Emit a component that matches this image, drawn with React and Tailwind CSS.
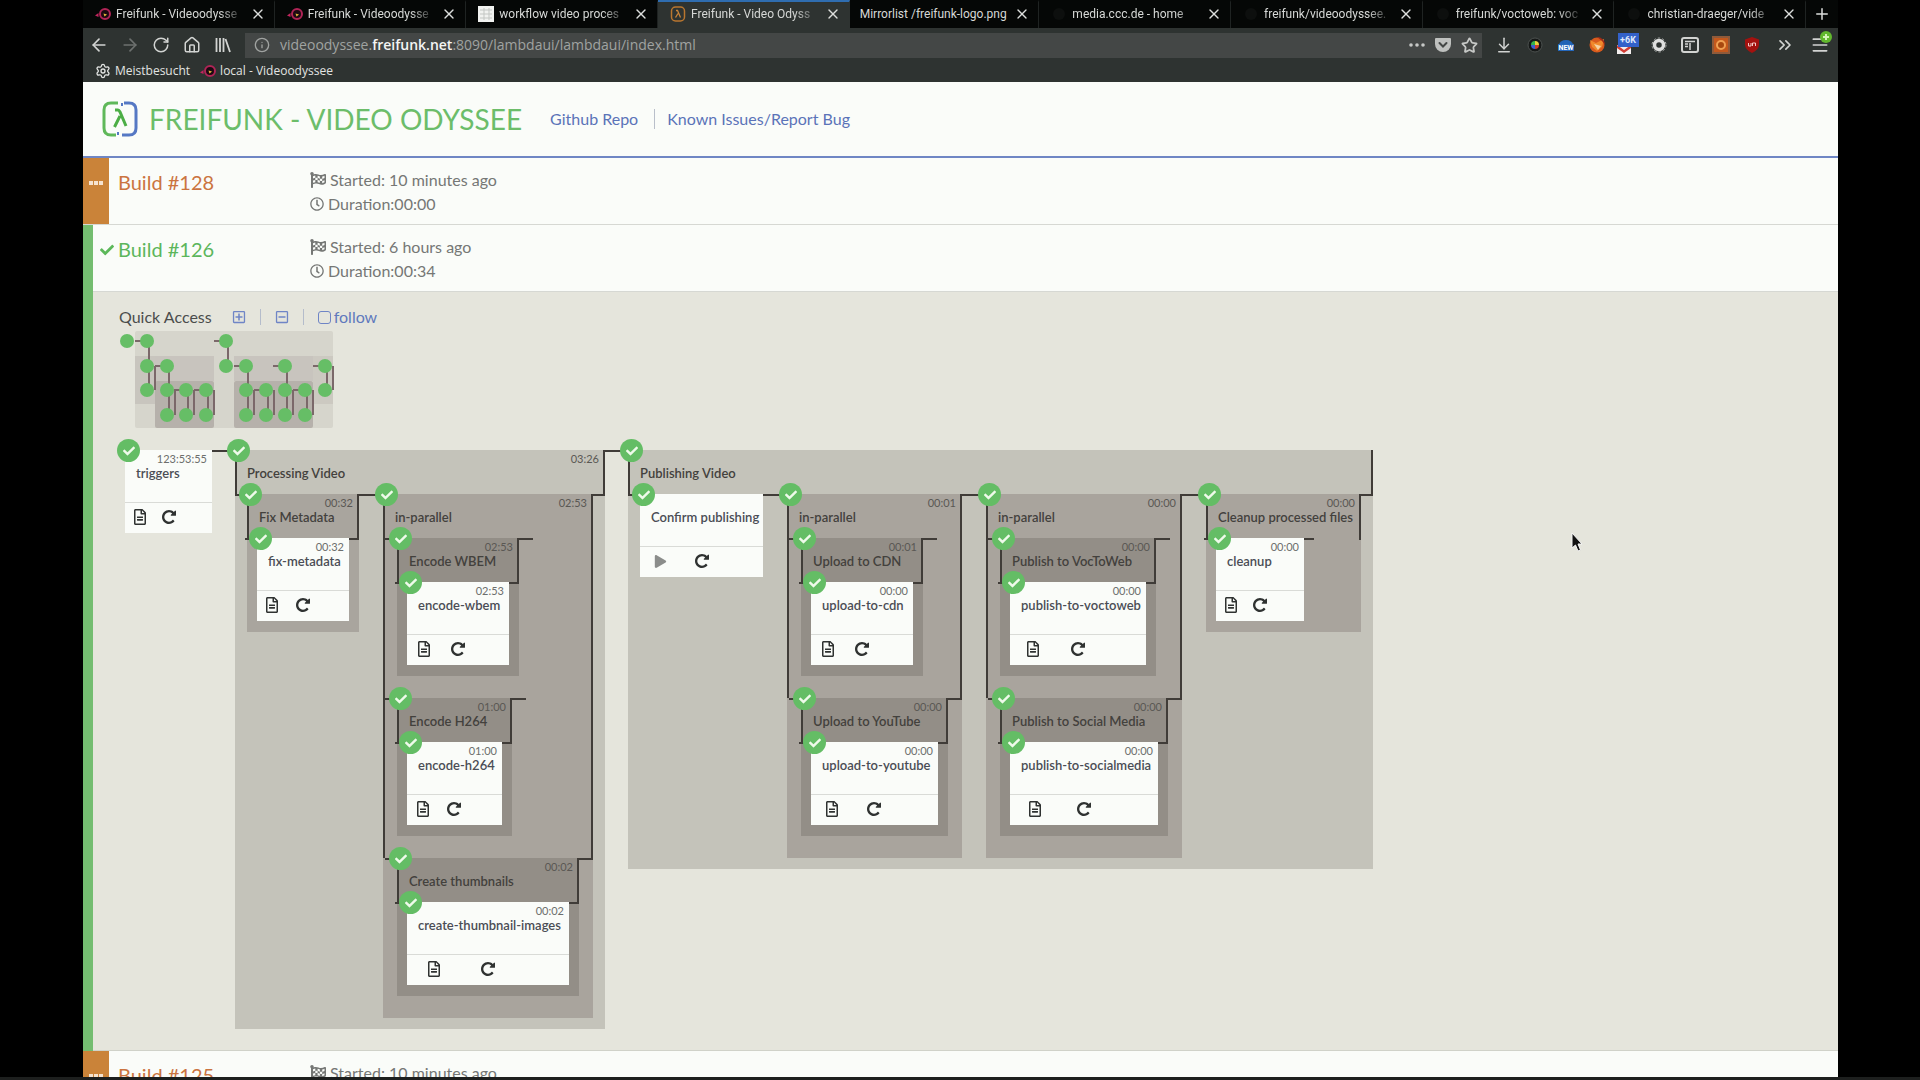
import clsx from "clsx";
import {
    FaCheck,
    FaFlagCheckered,
    FaPlay,
    FaRegClock,
    FaRegFileAlt,
    FaRegMinusSquare,
    FaRegPlusSquare,
} from "react-icons/fa";
import {
    ArrowDownToLine,
    ArrowLeft,
    ArrowRight,
    ChevronsRight,
    House,
    Info,
    Menu,
    PanelLeft,
    Plus,
    RotateCw,
    Settings,
    Star,
    X,
} from "lucide-react";

const tabs = [
    { title: "Freifunk - Videoodysse", icon: "freifunk" },
    { title: "Freifunk - Videoodysse", icon: "freifunk" },
    { title: "workflow video proces", icon: "sheet" },
    { title: "Freifunk - Video Odyss", icon: "lambda", active: true },
    { title: "Mirrorlist /freifunk-logo.png" },
    { title: "media.ccc.de - home", icon: "dark" },
    { title: "freifunk/videoodyssee.", icon: "dark" },
    { title: "freifunk/voctoweb: voc", icon: "dark" },
    { title: "christian-draeger/vide", icon: "dark" },
];

const pipeline = [
    { name: "triggers", time: "123:53:55", width: "w-[87px]" },
    {
        name: "Processing Video",
        time: "03:26",
        steps: [
            {
                name: "Fix Metadata",
                time: "00:32",
                tone: "bg-[#a9a59e]",
                steps: [
                    { name: "fix-metadata", time: "00:32", width: "w-[92px]" },
                ],
            },
            {
                name: "in-parallel",
                time: "02:53",
                parallel: true,
                steps: [
                    {
                        name: "Encode WBEM",
                        time: "02:53",
                        steps: [
                            {
                                name: "encode-wbem",
                                time: "02:53",
                                width: "w-[102px]",
                            },
                        ],
                    },
                    {
                        name: "Encode H264",
                        time: "01:00",
                        steps: [
                            {
                                name: "encode-h264",
                                time: "01:00",
                                width: "w-[95px]",
                            },
                        ],
                    },
                    {
                        name: "Create thumbnails",
                        time: "00:02",
                        steps: [
                            {
                                name: "create-thumbnail-images",
                                time: "00:02",
                                width: "w-[162px]",
                            },
                        ],
                    },
                ],
            },
        ],
    },
    {
        name: "Publishing Video",
        last: true,
        steps: [
            { name: "Confirm publishing", manual: true, width: "w-[123px]" },
            {
                name: "in-parallel",
                time: "00:01",
                parallel: true,
                steps: [
                    {
                        name: "Upload to CDN",
                        time: "00:01",
                        steps: [
                            {
                                name: "upload-to-cdn",
                                time: "00:00",
                                width: "w-[102px]",
                            },
                        ],
                    },
                    {
                        name: "Upload to YouTube",
                        time: "00:00",
                        steps: [
                            {
                                name: "upload-to-youtube",
                                time: "00:00",
                                width: "w-[127px]",
                            },
                        ],
                    },
                ],
            },
            {
                name: "in-parallel",
                time: "00:00",
                parallel: true,
                steps: [
                    {
                        name: "Publish to VocToWeb",
                        time: "00:00",
                        steps: [
                            {
                                name: "publish-to-voctoweb",
                                time: "00:00",
                                width: "w-[136px]",
                            },
                        ],
                    },
                    {
                        name: "Publish to Social Media",
                        time: "00:00",
                        steps: [
                            {
                                name: "publish-to-socialmedia",
                                time: "00:00",
                                width: "w-[148px]",
                            },
                        ],
                    },
                ],
            },
            {
                name: "Cleanup processed files",
                time: "00:00",
                width: "w-[155px]",
                steps: [{ name: "cleanup", time: "00:00", width: "w-[88px]" }],
            },
        ],
    },
];

const toneByDepth = ["bg-[#c4c3ba]", "bg-[#a9a49d]", "bg-[#938e87]"];

function FreifunkIcon() {
    return (
        <svg viewBox="0 0 16 16" className="size-4 shrink-0">
            <circle cx="10" cy="8" r="5" fill="#1c0a12" stroke="#b02456" strokeWidth="2" />
            <path d="M0 9.500L3.500 7v4z" fill="#c3265f" />
            <path d="M8.500 7.500L12 8.500L9.500 10.500z" fill="#e5b53a" />
        </svg>
    );
}

function TabIcon({ type }) {
    if (type === "freifunk") return <FreifunkIcon />;
    if (type === "sheet")
        return (
            <svg viewBox="0 0 16 16" className="size-4 shrink-0">
                <path d="M0 0h16v16H0z" fill="#f1f2f0" />
                <path d="M2 4h12M2 8h12M2 12h12M6 2v12M11 2v12" stroke="#c3c6c3" />
            </svg>
        );
    if (type === "lambda")
        return (
            <svg viewBox="0 0 16 16" className="size-4 shrink-0" fill="none">
                <rect x="1.500" y="1" width="13" height="14" rx="4" stroke="#b9762f" strokeWidth="1.500" />
                <path d="M6 4.500h1.500L10.500 11.500M8 7.500L5.500 11.500" stroke="#c9843a" strokeWidth="1.300" />
            </svg>
        );
    return (
        <svg viewBox="0 0 16 16" className="size-4 shrink-0">
            <circle cx="8" cy="8" r="6" fill="#0d0f0e" />
        </svg>
    );
}

function Tab({ title, icon, active }) {
    return (
        <div
            className={clsx(
                "flex min-w-0 flex-1 items-center gap-[5px] border-t-2 border-r pr-2 pb-[2px]",
                icon ? "pl-3" : "pl-[10px]",
                active
                    ? "border-t-[#2f6db0] border-r-transparent bg-[#2e3331]"
                    : "border-t-transparent border-r-[#1f2322]"
            )}
        >
            {icon && <TabIcon type={icon} />}
            <a
                href="#tab"
                className={clsx(
                    "min-w-0 flex-1 overflow-hidden text-xs whitespace-nowrap text-[#d6d8d6]",
                    icon && "mask-r-from-80% mask-r-to-100%"
                )}
            >
                {title}
            </a>
            <button type="button" aria-label="Close tab">
                <X className="size-4 text-[#dcdedc]" />
            </button>
        </div>
    );
}

function ToolButton({ label, className, children }) {
    return (
        <button
            type="button"
            aria-label={label}
            className={clsx(
                "flex w-[31px] shrink-0 items-center justify-center text-[#d2d4d2]",
                className
            )}
        >
            {children}
        </button>
    );
}

function Library() {
    return (
        <svg viewBox="0 0 16 16" className="size-4" stroke="currentColor" strokeWidth="1.800">
            <path d="M1.500 1v14M5 1v14M8.500 1v14M10.500 2L15 15" />
        </svg>
    );
}

function Extensions() {
    return (
        <>
            <ToolButton label="Color picker">
                <svg viewBox="0 0 16 16" className="size-4">
                    <circle cx="8" cy="8" r="7" fill="#161918" stroke="#4b504e" />
                    <path d="M8 8V4A4 4 0 0 0 4 8z" fill="#35b14c" />
                    <path d="M8 8h4A4 4 0 0 0 8 4z" fill="#e8d13c" />
                    <path d="M8 8v4A4 4 0 0 0 12 8z" fill="#c83c2e" />
                    <path d="M8 8H4A4 4 0 0 0 8 12z" fill="#3a5fd0" />
                </svg>
            </ToolButton>
            <ToolButton label="New">
                <svg viewBox="0 0 18 16" className="h-4 w-[18px]">
                    <path d="M2 8a7 5 0 0 1 14 0z" fill="#1f62b5" />
                    <path d="M1 7h16v7H1z" fill="#2468bd" />
                    <text x="9" y="13" textAnchor="middle" fontSize="7" fontWeight="700" fill="#fff">
                        NEW
                    </text>
                </svg>
            </ToolButton>
            <ToolButton label="Fox">
                <svg viewBox="0 0 18 18" className="size-[18px]">
                    <circle cx="9" cy="9" r="7.500" fill="#d85a1d" />
                    <path d="M2 4l6 3 8-4-2 8-5 4-5-4z" fill="#f08a2c" />
                    <path d="M6 8l7 2-3 4z" fill="#f6d3a4" />
                    <path d="M9 1a8 8 0 0 1 8 8l-3-4z" fill="#a02a18" />
                </svg>
            </ToolButton>
            <ToolButton label="Mail">
                <svg viewBox="0 0 24 26" className="h-[26px] w-6">
                    <path d="M1 13h14v9H1z" fill="#f3efee" />
                    <path d="M1 13l7 5 7-5v3l-7 5-7-5z" fill="#d23d34" />
                    <path d="M2 1h21v14H2z" fill="#3361c9" />
                    <text x="12" y="11" textAnchor="middle" fontSize="9" fontWeight="700" fill="#dfe8fb">
                        +6K
                    </text>
                </svg>
            </ToolButton>
            <ToolButton label="Settings">
                <svg viewBox="0 0 16 16" className="size-4" fill="none">
                    <circle cx="8" cy="8" r="4.500" stroke="#dedfde" strokeWidth="3.500" />
                    <circle cx="8" cy="8" r="7" stroke="#a9acaa" strokeDasharray="2.500 2" />
                </svg>
            </ToolButton>
            <ToolButton label="Sidebar">
                <svg viewBox="0 0 18 18" className="size-[18px]" fill="none" stroke="currentColor">
                    <rect x="1" y="2" width="16" height="14" rx="2" strokeWidth="2" />
                    <path d="M4 5.500h10M4 8h3M4 10.500h3M9 7v7" strokeWidth="1.500" />
                </svg>
            </ToolButton>
            <ToolButton label="Recorder">
                <svg viewBox="0 0 18 18" className="size-[18px]">
                    <rect x="1" y="1" width="16" height="16" fill="#c4581c" stroke="#8f5a3a" strokeWidth="2" />
                    <circle cx="9" cy="9" r="4" fill="#a8480f" stroke="#f0a052" strokeWidth="2" />
                </svg>
            </ToolButton>
            <ToolButton label="Blocker">
                <svg viewBox="0 0 16 16" className="size-4">
                    <path d="M8 0l7 2.500v5Q15 13 8 16Q1 13 1 7.500v-5z" fill="#a3120f" />
                    <path d="M4.500 6v3h2.500V6M8.500 9V6h3v3" stroke="#f3c9c7" fill="none" />
                </svg>
            </ToolButton>
        </>
    );
}

function BrowserChrome() {
    return (
        <div className="shrink-0 bg-[#2e3331] font-['Roboto',sans-serif]">
            <div className="flex h-7 bg-[#050706]">
                {tabs.map((tab, i) => (
                    <Tab key={i} {...tab} />
                ))}
                <button
                    type="button"
                    aria-label="New tab"
                    className="flex w-8 items-center justify-center"
                >
                    <Plus className="size-[18px] text-[#dcdedc]" />
                </button>
            </div>
            <div className="flex h-[34px] items-center pr-[3px]">
                <ToolButton label="Back">
                    <ArrowLeft className="size-5" />
                </ToolButton>
                <ToolButton label="Forward">
                    <ArrowRight className="size-5 text-[#6d716f]" />
                </ToolButton>
                <ToolButton label="Reload">
                    <RotateCw className="size-[18px]" />
                </ToolButton>
                <ToolButton label="Home">
                    <House className="size-[18px]" />
                </ToolButton>
                <ToolButton label="Library">
                    <Library />
                </ToolButton>
                <div className="ml-[7px] flex h-[25px] min-w-0 flex-1 items-center gap-[10px] bg-[#444746] pr-1 pl-[9px] text-[#c6c8c6]">
                    <Info className="size-4 shrink-0 text-[#a0a3a1]" />
                    <div className="flex-1 font-['Open_Sans',sans-serif] text-sm leading-5 text-[#a0a3a1]">
                        videoodyssee.
                        <span className="font-semibold text-[#f4f5f4]">freifunk.net</span>
                        :8090/lambdaui/lambdaui/index.html
                    </div>
                    <svg viewBox="0 0 16 16" className="size-4" fill="currentColor">
                        <circle cx="2" cy="8" r="1.800" />
                        <circle cx="8" cy="8" r="1.800" />
                        <circle cx="14" cy="8" r="1.800" />
                    </svg>
                    <svg viewBox="0 0 16 16" className="size-4" fill="none">
                        <path d="M0 2q0-1 1-1h14q1 0 1 1v5a8 8 0 0 1-16 0z" fill="#bfc1bf" />
                        <path d="M4.500 6L8 9.500L11.500 6" stroke="#444746" strokeWidth="2" strokeLinecap="round" />
                    </svg>
                    <Star className="size-[17px]" strokeWidth={2.5} />
                </div>
                <ToolButton label="Downloads" className="ml-[6px]">
                    <ArrowDownToLine className="size-[18px]" />
                </ToolButton>
                <Extensions />
                <ToolButton label="More tools" className="ml-[2px]">
                    <ChevronsRight className="size-5" />
                </ToolButton>
                <ToolButton label="Menu" className="relative ml-1">
                    <Menu className="size-5" />
                    <svg viewBox="0 0 12 12" className="absolute -top-1 right-[3px] size-3">
                        <circle cx="6" cy="6" r="6" fill="#62b82e" />
                        <path d="M6 3v6M3 6h6" stroke="#d5f3b8" strokeWidth="2" />
                    </svg>
                </ToolButton>
            </div>
            <div className="flex h-5 items-center gap-[10px] pb-[2px] pl-3 font-['Open_Sans',sans-serif] text-xs text-[#e2e4e2]">
                <a href="#most-visited" className="flex items-center gap-1">
                    <Settings className="size-4" />
                    Meistbesucht
                </a>
                <a href="#local" className="flex items-center gap-1">
                    <FreifunkIcon />
                    local - Videoodyssee
                </a>
            </div>
        </div>
    );
}

function Header() {
    return (
        <header className="flex h-[76px] shrink-0 items-center border-b-2 border-[#6f86c4] bg-[#fafcf9] pl-[19px]">
            <svg viewBox="0 0 36 36" className="size-9" fill="none" strokeWidth="3">
                <path d="M16 2H9Q2 2 2 9v18q0 7 7 7h5" stroke="#5fb85a" />
                <path d="M20 34h7q7 0 7-7V9q0-7-7-7h-5" stroke="#5578c4" />
                <path d="M20 2v3M16 34v-3" stroke="#5578c4" strokeWidth="2" />
                <path d="M13 9h3q1 0 2 2l6 14M18 15l-5.500 11" stroke="#4cae46" strokeWidth="3" />
            </svg>
            <h1 className="ml-[11px] text-[28px] leading-9 text-[#6cbd6a]">
                FREIFUNK - VIDEO ODYSSEE
            </h1>
            <nav className="ml-7 flex items-center text-base leading-5 text-[#5b73b8]">
                <a href="#repo">Github Repo</a>
                <a href="#issues" className="ml-4 border-l border-[#b9bfca] pl-3">
                    Known Issues/Report Bug
                </a>
            </nav>
        </header>
    );
}

function BuildRow({ number, started, duration, running }) {
    return (
        <div className="flex h-[67px] shrink-0 border-b border-[#d6d8d3] bg-[#fafcf9]">
            {running ? (
                <div className="mr-[9px] flex w-[26px] justify-center bg-[#ca8339] pt-[23px]">
                    <svg viewBox="0 0 14 4" className="h-1 w-[14px]" fill="#f6e3cf">
                        <path d="M0 0h4v4H0zM5 0h4v4H5zM10 0h4v4h-4z" />
                    </svg>
                </div>
            ) : (
                <div className="w-[25px] pt-[18px] pl-[7px]">
                    <FaCheck className="size-[14px] text-[#5cb85a]" />
                </div>
            )}
            <a
                href={`#build-${number}`}
                className={clsx(
                    "w-48 pt-3 text-xl leading-6",
                    running ? "text-[#cb7440]" : "text-[#5cb65c]"
                )}
            >
                Build #{number}
            </a>
            <div className="pt-[10px] text-base leading-6 text-[#757775]">
                <div className="flex items-center gap-1">
                    <FaFlagCheckered className="size-4" />
                    Started: {started}
                </div>
                <div className="flex items-center gap-1">
                    <FaRegClock className="size-[14px]" />
                    Duration:{duration}
                </div>
            </div>
        </div>
    );
}

function MiniMap() {
    const col = (k) => 8 + Math.round(k * 19.8);
    const rows = [10, 35, 59, 84];
    const dots = [
        [0, 0], [1, 0], [5, 0],
        [1, 1], [2, 1], [5, 1], [6, 1], [8, 1], [10, 1],
        [1, 2], [2, 2], [3, 2], [4, 2], [6, 2], [7, 2], [8, 2], [9, 2], [10, 2],
        [2, 3], [3, 3], [4, 3], [6, 3], [7, 3], [8, 3], [9, 3],
    ];
    // column, first row, last row
    const stems = [
        [1, 0, 2], [2, 1, 3], [3, 2, 3], [4, 2, 3], [5, 0, 1],
        [6, 1, 3], [7, 2, 3], [8, 1, 3], [9, 2, 3], [10, 1, 2],
    ];
    const brackets = [[1, 1], [2, 2], [3, 2], [4, 2], [6, 2], [7, 2], [8, 2], [9, 2], [10, 1]];
    const links = [[1, 0], [2, 1], [3, 2], [4, 2], [5, 0], [6, 1], [7, 2], [8, 1], [9, 2], [10, 1]];
    return (
        <svg viewBox="0 0 216 100" className="h-[100px] w-[216px]">
            <rect x="16" y="0" width="198" height="97" rx="2" fill="#d6d5cc" />
            <rect x="16" y="25" width="20" height="48" fill="#c8c5be" />
            <rect x="36" y="25" width="59" height="25" fill="#c8c4be" />
            <rect x="115" y="25" width="79" height="25" fill="#c8c4be" />
            <rect x="194" y="25" width="20" height="48" fill="#ccc9c1" />
            <rect x="36" y="50" width="59" height="47" rx="2" fill="#b6b1ab" />
            <rect x="115" y="50" width="79" height="47" rx="2" fill="#b6b1ab" />
            <g stroke="#7b686a" strokeWidth="2">
                {stems.map(([k, a, b]) => (
                    <path key={k} d={`M${col(k) + 2} ${rows[a]}V${rows[b]}`} />
                ))}
                {brackets.map(([k, r]) => (
                    <path key={k} d={`M${col(k) + 8} ${rows[r]}V${rows[r + 1]}`} />
                ))}
                {links.map(([k, r]) => (
                    <path key={k} d={`M${col(k) - 12} ${rows[r]}H${col(k)}`} />
                ))}
            </g>
            {dots.map(([k, r]) => (
                <circle key={`${k}-${r}`} cx={col(k)} cy={rows[r]} r="7" fill="#66be66" />
            ))}
        </svg>
    );
}

function RepeatIcon() {
    return (
        <svg viewBox="0 128 1536 1536" className="size-[14px]" fill="currentColor">
            <path d="M1536 256v448q0 26-19 45t-45 19h-448q-42 0-59-40-17-39 14-69l138-138q-148-137-349-137-104 0-198.500 40.500t-163.500 109.500-109.500 163.500-40.500 198.500 40.500 198.500 109.500 163.500 163.500 109.500 198.500 40.500q119 0 225-52t179-147q7-10 23-12 15 0 25 9l137 138q9 8 9.500 20.500t-7.500 22.500q-109 132-264 204.500t-327 72.500q-156 0-298-61t-245-164-164-245-61-298 61-298 164-245 245-164 298-61q147 0 284.500 55.500t244.500 156.500l130-129q29-31 70-14 39 17 39 59z" />
        </svg>
    );
}

function Badge() {
    return (
        <span className="absolute -top-[11px] -left-2 z-10 flex size-[23px] items-center justify-center rounded-full bg-[#64bd65]">
            <FaCheck className="size-3 text-[#eefaea]" />
        </span>
    );
}

// lines that run from a step's top edge to its neighbours
function Connectors({ before, after }) {
    return (
        <>
            {before && (
                <span className="absolute top-0 right-full h-[2px] w-3 bg-[#403c38]" />
            )}
            {after && (
                <span className={clsx("absolute top-0 left-full h-[2px] bg-[#403c38]", after)} />
            )}
        </>
    );
}

function Card({ name, time, width, manual, before, after }) {
    return (
        <div className={clsx("relative shrink-0 bg-[#fafcf9]", width)}>
            <Connectors before={before} after={after} />
            <Badge />
            <span className="absolute top-[2px] right-[5px] text-[11px] leading-[14px] text-[#6c6e6c]">
                {time}
            </span>
            <h3 className="h-[52px] pt-[15px] pl-[11px] text-[13px] leading-4 font-semibold whitespace-nowrap text-[#4a4d55]">
                {name}
            </h3>
            <div className="grid h-[31px] grid-cols-3 border-t border-[#d9dbd7] pb-[2px] text-[#2f3231]">
                {manual ? (
                    <button type="button" aria-label={`Start ${name}`} className="flex items-center justify-center text-[#8b8d8b]">
                        <FaPlay className="size-[13px]" />
                    </button>
                ) : (
                    <button type="button" aria-label={`Output of ${name}`} className="flex items-center justify-center">
                        <FaRegFileAlt className="size-4" />
                    </button>
                )}
                <button type="button" aria-label={`Retrigger ${name}`} className="flex items-center justify-center">
                    <RepeatIcon />
                </button>
            </div>
        </div>
    );
}

function Group({ name, time, tone, width, steps, parallel, depth, before, after }) {
    const outer = depth === 0;
    const rail = parallel ? "bottom-40" : "h-[46px]";
    return (
        <div className={clsx("relative shrink-0", tone || toneByDepth[depth], width)}>
            <Connectors before={before} after={after} />
            <span className={clsx("absolute top-0 left-0 w-[2px] bg-[#403c38]", rail)} />
            <span className={clsx("absolute top-0 right-0 w-[2px] bg-[#403c38]", rail)} />
            <Badge />
            <span className="absolute top-[2px] right-[6px] text-[11px] leading-[14px] text-[#5a5854]">
                {time}
            </span>
            <h3 className="h-11 pt-[15px] pl-3 text-[13px] leading-4 font-semibold whitespace-nowrap text-[#43413d]">
                {name}
            </h3>
            <div
                className={clsx("flex items-start", {
                    "gap-6 px-3 pb-[11px]": outer,
                    "flex-col gap-[22px] px-[14px] pb-[22px]": parallel,
                    "px-[10px] pb-[11px]": !outer && !parallel,
                })}
            >
                {steps.map((step, i) => (
                    <Step
                        key={i}
                        {...step}
                        depth={depth + 1}
                        before
                        after={
                            parallel
                                ? "w-[14px]"
                                : outer && i < steps.length - 1
                                  ? "w-6"
                                  : outer
                                    ? "w-3"
                                    : "w-[10px]"
                        }
                    />
                ))}
            </div>
        </div>
    );
}

function Step(props) {
    return props.steps ? <Group {...props} /> : <Card {...props} />;
}

function BuildDetails() {
    return (
        <div className="border-b border-[#d0d2c9] bg-[#e5e5dc] pt-[13px] pb-[21px] pl-[26px]">
            <div className="flex h-6 items-center text-base text-[#4b4d4c]">
                <h2>Quick Access</h2>
                <div className="ml-5 flex items-center gap-[14px] text-[#6f85c6]">
                    <button type="button" aria-label="Expand all">
                        <FaRegPlusSquare className="size-[14px]" />
                    </button>
                    <span className="h-4 w-px bg-[#b4bccb]" />
                    <button type="button" aria-label="Collapse all">
                        <FaRegMinusSquare className="size-[14px]" />
                    </button>
                    <span className="h-4 w-px bg-[#b4bccb]" />
                    <label className="flex items-center gap-[3px] text-[#6079bd]">
                        <input
                            type="checkbox"
                            className="size-[13px] appearance-none rounded-[3px] border border-[#6f85c6]"
                        />
                        follow
                    </label>
                </div>
            </div>
            <div className="mt-[2px] h-[119px]">
                <MiniMap />
            </div>
            <div className="ml-[6px] flex items-start gap-[23px]">
                {pipeline.map((step, i) => (
                    <Step
                        key={step.name}
                        {...step}
                        depth={0}
                        before={i > 0}
                        after={step.last ? undefined : "w-[23px]"}
                    />
                ))}
            </div>
        </div>
    );
}

export default function App() {
    return (
        <div className="relative flex h-screen flex-col overflow-hidden bg-black font-['Lato',sans-serif]">
            <div className="mr-[82px] ml-[83px] flex min-h-0 flex-1 flex-col overflow-hidden bg-[#fafcf9]">
                <BrowserChrome />
                <Header />
                <BuildRow number="128" started="10 minutes ago" duration="00:00" running />
                <section className="shrink-0 border-l-[10px] border-[#74bd70]">
                    <BuildRow number="126" started="6 hours ago" duration="00:34" />
                    <BuildDetails />
                </section>
                <BuildRow number="125" started="10 minutes ago" duration="00:00" running />
            </div>
            <div className="h-[3px] shrink-0 bg-[#1d1f1e]" />
            <svg viewBox="0 0 12 20" className="absolute top-[532px] left-[1571px] h-5 w-3">
                <path d="M1 1v15l3.500-3 2.500 6 2.500-1-2.500-6H11z" fill="#111" stroke="#f5f5f5" />
            </svg>
        </div>
    );
}
